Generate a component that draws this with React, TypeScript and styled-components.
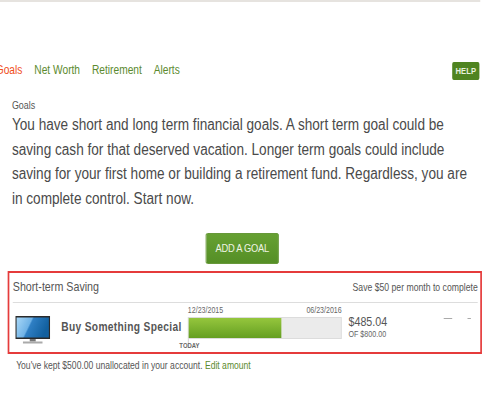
import React from 'react';
import styled, { createGlobalStyle } from 'styled-components';

const GlobalStyle = createGlobalStyle`
  html, body {
    margin: 0;
    padding: 0;
    background: #ffffff;
    overflow: hidden;
  }
  body {
    font-family: "Liberation Sans", Arial, sans-serif;
    color: #444444;
  }
`;

// the screenshot is a 588px wide page squeezed into 500px
const Page = styled.div`
  width: 588px;
  height: 400px;
  overflow: hidden;
  transform: scaleX(0.85);
  transform-origin: left top;
`;

const TopStrip = styled.div`
  width: 565px;
  height: 2px;
  background: #e6e3df;
`;

const NavRow = styled.nav`
  display: flex;
  align-items: center;
  justify-content: space-between;
  height: 18px;
  margin-top: 60px;
  width: 564px;
`;

const NavLinks = styled.div`
  display: flex;
  gap: 14px;
  margin: 0 0 3px -5px;
`;

const NavLink = styled.a<{ $active?: boolean }>`
  font-size: 12px;
  color: ${(p) => (p.$active ? '#f04e1c' : '#5b8a2e')};
`;

const HelpBadge = styled.span`
  display: flex;
  align-items: center;
  justify-content: center;
  width: 32px;
  height: 18px;
  border-radius: 2px;
  background: #4f8420;
  color: #e8f0dc;
  font-size: 9px;
  font-weight: bold;
`;

const Intro = styled.section`
  padding: 18px 0 0 14px;
`;

const Crumb = styled.div`
  font-size: 10.5px;
  line-height: 15px;
  color: #555555;
`;

const Lead = styled.p`
  margin: 0;
  font-size: 16px;
  line-height: 24.7px;
  color: #4a4a4a;
  white-space: nowrap;
`;

const ButtonRow = styled.div`
  display: flex;
  justify-content: center;
  width: 570px;
  margin-top: 21px;
`;

const AddButton = styled.button`
  width: 86px;
  height: 31px;
  padding: 0;
  border: 1px solid #5a8f28;
  border-radius: 2px;
  background: linear-gradient(#66a032, #558f26);
  color: #eef4e4;
  font-family: inherit;
  font-size: 11px;
  letter-spacing: -0.3px;
`;

const Card = styled.section`
  box-sizing: border-box;
  width: 558px;
  height: 83px;
  margin: 7px 0 0 9px;
  padding: 0 3px 0 4px;
  border: 2px solid #e53b3b;
`;

const CardHeader = styled.header`
  display: flex;
  align-items: center;
  justify-content: space-between;
  height: 29px;
  border-bottom: 1px solid #dddddd;
`;

const CardTitle = styled.h3`
  margin: 0;
  font-size: 12.6px;
  font-weight: normal;
  color: #555555;
`;

const CardHint = styled.span`
  font-size: 10.2px;
  color: #555555;
`;

const GoalRow = styled.div`
  display: flex;
  align-items: flex-start;
`;

const TvIcon = styled.svg`
  flex: none;
  width: 41px;
  height: 28px;
  margin: 13px 0 0 3px;
`;

const GoalName = styled.div`
  flex: none;
  width: 162px;
  box-sizing: border-box;
  padding: 17px 0 0 13px;
  font-size: 12px;
  font-weight: bold;
  letter-spacing: 0.4px;
  color: #555555;
  white-space: nowrap;
`;

const Track = styled.div`
  position: relative;
  flex: none;
  width: 181px;
  margin-top: 2px;
`;

const Dates = styled.div`
  display: flex;
  justify-content: space-between;
  margin-bottom: 2px;
  font-size: 8.3px;
  line-height: 10px;
  color: #666666;
`;

const Bar = styled.div`
  box-sizing: border-box;
  height: 22px;
  border: 1px solid #dcdcdc;
  background: #ebebeb;
`;

const Fill = styled.div`
  height: 100%;
  background: linear-gradient(#95c63d, #659f22);
`;

const TodayTick = styled.span`
  position: absolute;
  left: 0;
  top: 34px;
  width: 1px;
  height: 4px;
  background: #cccccc;
`;

const TodayLabel = styled.span`
  position: absolute;
  left: -10px;
  top: 37px;
  font-size: 7px;
  font-weight: bold;
  color: #666666;
`;

const Amounts = styled.div`
  margin: 13px 0 0 8px;
`;

const Amount = styled.div`
  font-size: 12.6px;
  line-height: 13px;
  color: #555555;
`;

const AmountOf = styled.div`
  font-size: 8.4px;
  line-height: 10px;
  color: #666666;
`;

const Controls = styled.div`
  display: flex;
  gap: 18px;
  margin: 15px 8px 0 auto;
`;

const ControlMark = styled.span<{ $wide?: boolean }>`
  display: block;
  width: ${(p) => (p.$wide ? '10px' : '4px')};
  height: 1px;
  background: #aaaaaa;
`;

const Footnote = styled.p`
  margin: 6px 0 0 19px;
  font-size: 10.1px;
  color: #555555;
`;

const EditLink = styled.a`
  color: #5b8a2e;
`;

const App: React.FC = () => {
  return (
    <Page>
      <GlobalStyle />
      <TopStrip />
      <NavRow>
        <NavLinks>
          <NavLink $active>Goals</NavLink>
          <NavLink>Net Worth</NavLink>
          <NavLink>Retirement</NavLink>
          <NavLink>Alerts</NavLink>
        </NavLinks>
        <HelpBadge>HELP</HelpBadge>
      </NavRow>

      <Intro>
        <Crumb>Goals</Crumb>
        <Lead>
          You have short and long term financial goals. A short term goal could be
          <br />
          saving cash for that deserved vacation. Longer term goals could include
          <br />
          saving for your first home or building a retirement fund. Regardless, you are
          <br />
          in complete control. Start now.
        </Lead>
      </Intro>

      <ButtonRow>
        <AddButton>ADD A GOAL</AddButton>
      </ButtonRow>

      <Card>
        <CardHeader>
          <CardTitle>Short-term Saving</CardTitle>
          <CardHint>Save $50 per month to complete</CardHint>
        </CardHeader>
        <GoalRow>
          <TvIcon viewBox="0 0 41 28" preserveAspectRatio="none">
            <defs>
              <linearGradient id="screen" x1="0" y1="0" x2="1" y2="0.3">
                <stop offset="0" stopColor="#a9d8f8" />
                <stop offset="0.45" stopColor="#6fb2e6" />
                <stop offset="0.5" stopColor="#2f7fc4" />
                <stop offset="1" stopColor="#12609f" />
              </linearGradient>
            </defs>
            <rect x="0" y="0" width="41" height="23" fill="#2a2a2a" />
            <rect x="1.5" y="1.5" width="38" height="20" fill="url(#screen)" />
            <rect x="17" y="23" width="7" height="2.5" fill="#777777" />
            <rect x="9" y="25.5" width="23" height="2" fill="#aaaaaa" />
          </TvIcon>
          <GoalName>Buy Something Special</GoalName>
          <Track>
            <Dates>
              <span>12/23/2015</span>
              <span>06/23/2016</span>
            </Dates>
            <Bar>
              <Fill style={{ width: `${(485.04 / 800) * 100}%` }} />
            </Bar>
            <TodayTick />
            <TodayLabel>TODAY</TodayLabel>
          </Track>
          <Amounts>
            <Amount>$485.04</Amount>
            <AmountOf>OF $800.00</AmountOf>
          </Amounts>
          <Controls>
            <ControlMark $wide />
            <ControlMark />
          </Controls>
        </GoalRow>
      </Card>

      <Footnote>
        You've kept $500.00 unallocated in your account. <EditLink>Edit amount</EditLink>
      </Footnote>
    </Page>
  );
};

export default App;
